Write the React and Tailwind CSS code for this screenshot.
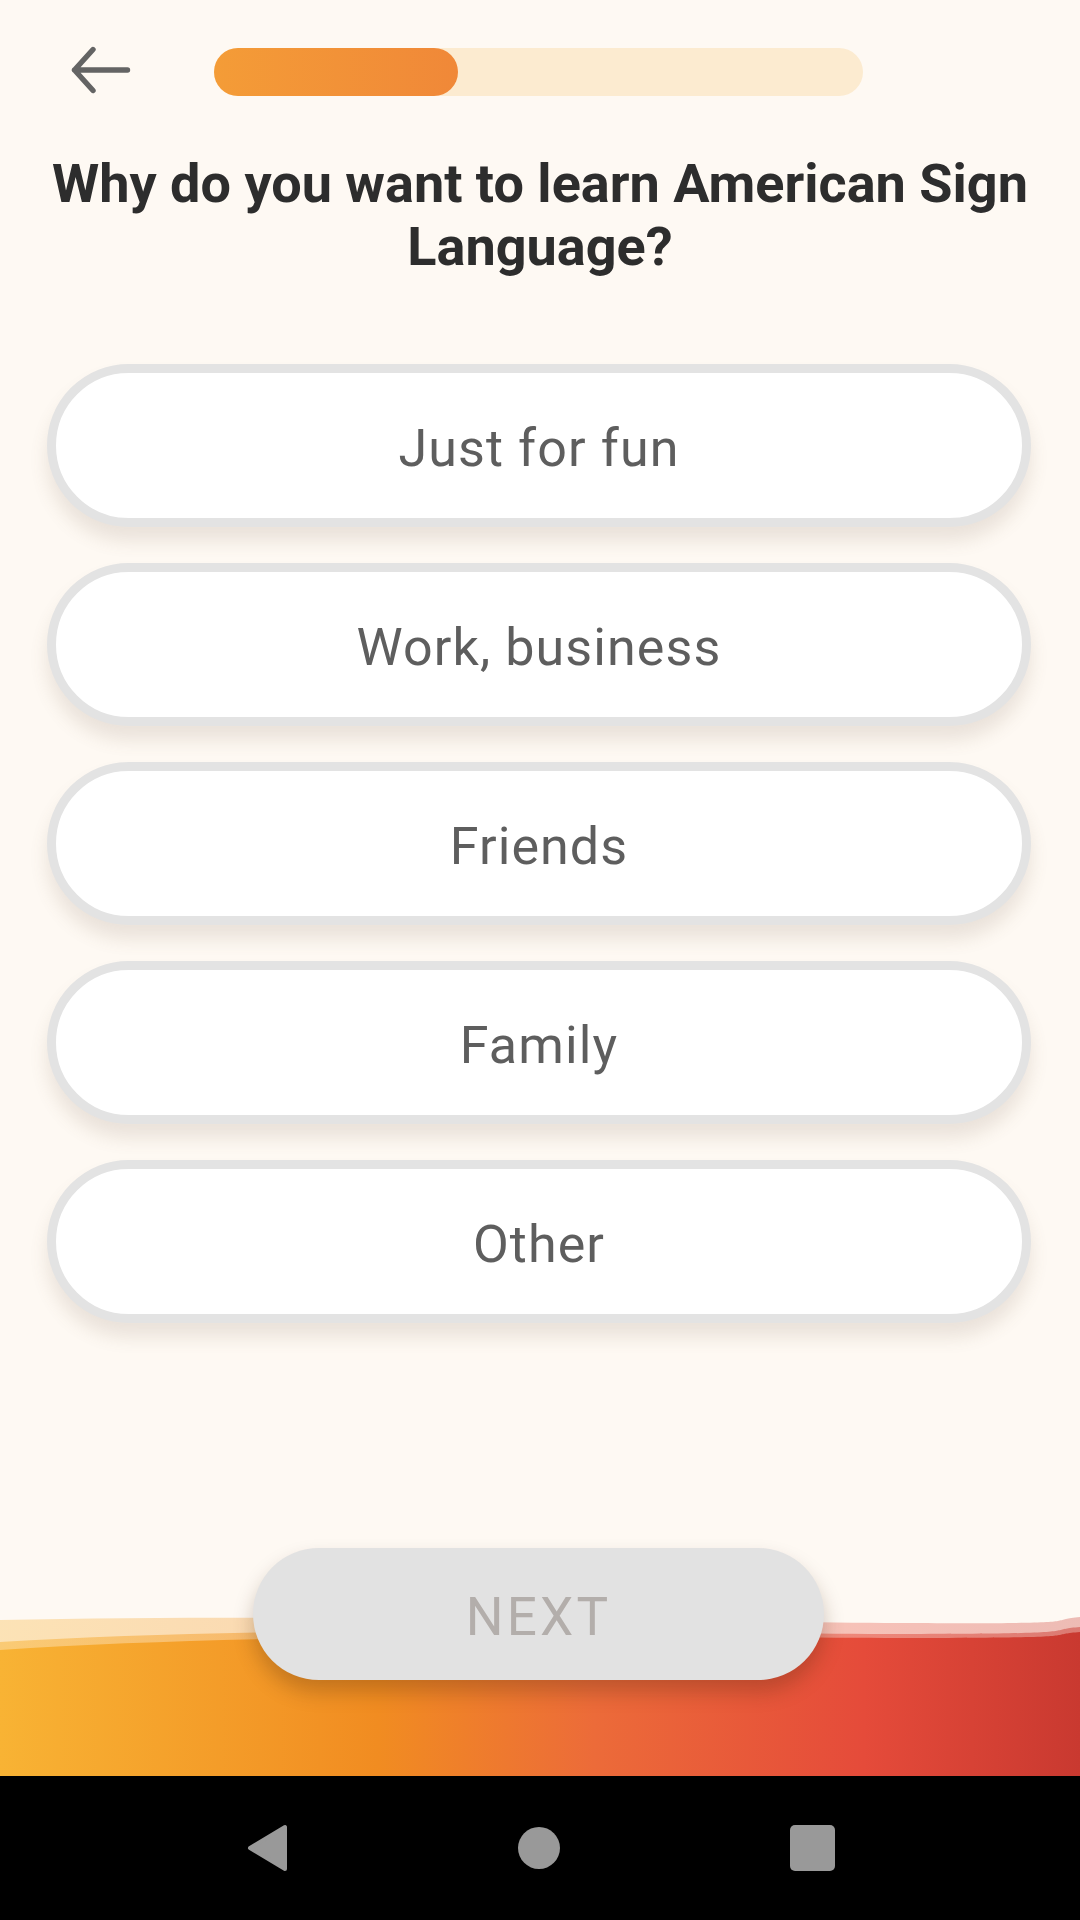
import React from 'react';

const options = ['Just for fun', 'Work, business', 'Friends', 'Family', 'Other'];

const BackArrow = () => (
    <svg width="66" height="56" viewBox="0 0 66 56" fill="none" className="ml-[68px] shrink-0">
        <path d="M6.5 26 H59.5 M6.5 26 L25 5.5 M6.5 26 L25 46.5" stroke="#646464" strokeWidth="5.4" strokeLinecap="round" strokeLinejoin="round" />
    </svg>
);

const Wave = () => (
    <svg className="absolute inset-0 h-full w-full" viewBox="0 0 1080 236" preserveAspectRatio="none">
        <defs>
            <linearGradient id="waveGrad" x1="0" y1="0" x2="1" y2="0">
                <stop offset="0" stopColor="#f8b334" />
                <stop offset="0.35" stopColor="#f18c21" />
                <stop offset="0.55" stopColor="#ec6b39" />
                <stop offset="0.8" stopColor="#e54b3a" />
                <stop offset="1" stopColor="#c93930" />
            </linearGradient>
        </defs>
        <path d="M0 80 C300 74 700 82 900 83 S1040 81 1080 77 V236 H0 Z" fill="url(#waveGrad)" opacity="0.32" />
        <path d="M0 102 C300 83 700 94 900 94 S1040 90 1080 87 V236 H0 Z" fill="url(#waveGrad)" opacity="0.5" />
        <path d="M0 110 C300 90 700 98 900 98 S1040 95 1080 92 V236 H0 Z" fill="url(#waveGrad)" />
    </svg>
);

const App = () => {
    return (
        <div className="flex h-[1920px] w-[1080px] flex-col bg-[#fef9f3] font-['Roboto',sans-serif]">
            {/* Top bar */}
            <div className="mt-[44px] flex h-[56px] items-center">
                <BackArrow />
                <div className="ml-[80px] h-[48px] w-[649px] rounded-full bg-[#fcebd0]">
                    <div className="h-full w-[244px] rounded-full bg-gradient-to-r from-[#f49c37] to-[#f08838]" />
                </div>
            </div>

            {/* Question */}
            <h1 className="mt-[52px] px-[36px] text-center text-[54px] font-bold leading-[63px] text-[#2d2d2d]">
                Why do you want to learn American Sign Language?
            </h1>

            {/* Options */}
            <div className="mt-[86px] flex flex-col gap-[36px]">
                {options.map((opt) => (
                    <button
                        key={opt}
                        className="ml-[47px] flex h-[163px] w-[984px] items-center justify-center rounded-full border-[9px] border-[#e3e3e3] bg-white pt-[6px] text-[52px] tracking-[1.1px] text-[#5e5e5e] shadow-[0_14px_18px_rgba(110,90,70,0.14)]"
                    >
                        {opt}
                    </button>
                ))}
            </div>

            <div className="flex-1" />

            {/* Bottom wave + next */}
            <div className="relative h-[236px]">
                <Wave />
                <div className="relative flex justify-center pt-[8px]">
                    <button className="ml-[-3px] flex h-[132px] w-[571px] items-center justify-center rounded-full bg-[#e2e2e2] pt-[8px] text-[53px] tracking-[0.06em] text-[#b3aeab] shadow-[0_12px_20px_rgba(60,30,10,0.25)]">
                        NEXT
                    </button>
                </div>
            </div>

            {/* Android nav bar */}
            <div className="flex h-[144px] items-center justify-center gap-[230px] bg-black">
                <svg width="42" height="48" viewBox="0 0 42 48">
                    <path d="M39 3 V45 L4 24 Z" fill="#999999" stroke="#999999" strokeWidth="4" strokeLinejoin="round" />
                </svg>
                <div className="h-[42px] w-[42px] rounded-full bg-[#999999]" />
                <div className="h-[46px] w-[45px] rounded-[5px] bg-[#999999]" />
            </div>
        </div>
    );
};

export default App;
